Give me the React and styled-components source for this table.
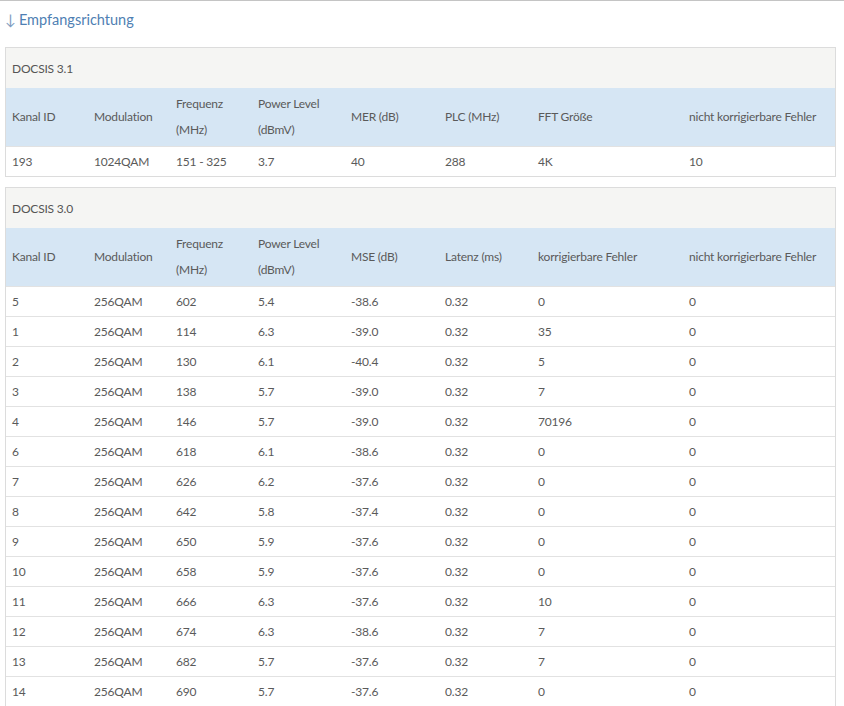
import React from "react";
import styled, { createGlobalStyle } from "styled-components";

const GlobalStyle = createGlobalStyle`
  html, body {
    margin: 0;
    padding: 0;
    background: #ffffff;
  }
  body {
    font-family: "Lato", "Liberation Sans", sans-serif;
    font-size: 12px;
    letter-spacing: -0.2px;
    color: #555555;
    border-top: 1px solid #c4c4c4;
  }
`;

const COLS = [82, 82, 82, 93, 94, 93, 151, 152];

const docsis31 = {
  title: "DOCSIS 3.1",
  headers: [
    "Kanal ID",
    "Modulation",
    ["Frequenz", "(MHz)"],
    ["Power Level", "(dBmV)"],
    "MER (dB)",
    "PLC (MHz)",
    "FFT Größe",
    "nicht korrigierbare Fehler"
  ],
  rows: [["193", "1024QAM", "151 - 325", "3.7", "40", "288", "4K", "10"]]
};

const docsis30 = {
  title: "DOCSIS 3.0",
  headers: [
    "Kanal ID",
    "Modulation",
    ["Frequenz", "(MHz)"],
    ["Power Level", "(dBmV)"],
    "MSE (dB)",
    "Latenz (ms)",
    "korrigierbare Fehler",
    "nicht korrigierbare Fehler"
  ],
  rows: [
    ["5", "256QAM", "602", "5.4", "-38.6", "0.32", "0", "0"],
    ["1", "256QAM", "114", "6.3", "-39.0", "0.32", "35", "0"],
    ["2", "256QAM", "130", "6.1", "-40.4", "0.32", "5", "0"],
    ["3", "256QAM", "138", "5.7", "-39.0", "0.32", "7", "0"],
    ["4", "256QAM", "146", "5.7", "-39.0", "0.32", "70196", "0"],
    ["6", "256QAM", "618", "6.1", "-38.6", "0.32", "0", "0"],
    ["7", "256QAM", "626", "6.2", "-37.6", "0.32", "0", "0"],
    ["8", "256QAM", "642", "5.8", "-37.4", "0.32", "0", "0"],
    ["9", "256QAM", "650", "5.9", "-37.6", "0.32", "0", "0"],
    ["10", "256QAM", "658", "5.9", "-37.6", "0.32", "0", "0"],
    ["11", "256QAM", "666", "6.3", "-37.6", "0.32", "10", "0"],
    ["12", "256QAM", "674", "6.3", "-38.6", "0.32", "7", "0"],
    ["13", "256QAM", "682", "5.7", "-37.6", "0.32", "7", "0"],
    ["14", "256QAM", "690", "5.7", "-37.6", "0.32", "0", "0"]
  ]
};

const ChannelTable = ({ data }) => (
  <Panel>
    <Table>
      <colgroup>
        {COLS.map((w, i) => (
          <col key={i} style={{ width: w }} />
        ))}
      </colgroup>
      <thead>
        <tr>
          <TitleCell colSpan={COLS.length}>{data.title}</TitleCell>
        </tr>
        <tr>
          {data.headers.map((h, i) => (
            <HeadCell key={i}>
              {Array.isArray(h) ? (
                <>
                  {h[0]}
                  <br />
                  {h[1]}
                </>
              ) : (
                h
              )}
            </HeadCell>
          ))}
        </tr>
      </thead>
      <tbody>
        {data.rows.map((r, i) => (
          <Row key={i}>
            {r.map((c, j) => (
              <Cell key={j}>{c}</Cell>
            ))}
          </Row>
        ))}
      </tbody>
    </Table>
  </Panel>
);

export default function App() {
  return (
    <>
      <GlobalStyle />
      <Page>
        <Heading>
          <Arrow>↓</Arrow>Empfangsrichtung
        </Heading>
        <ChannelTable data={docsis31} />
        <ChannelTable data={docsis30} />
      </Page>
    </>
  );
}

const Page = styled.div`
  display: flex;
  flex-direction: column;
  gap: 10px;
  padding: 9px 8px 0 5px;
`;

const Heading = styled.div`
  font-size: 14.5px;
  line-height: 20px;
  letter-spacing: 0;
  color: #4f7fb3;
  margin-bottom: 7px;
`;

const Arrow = styled.span`
  margin-right: 3px;
  color: #7d9cc0;
`;

const Panel = styled.div`
  border: 1px solid #dcdcdc;
  width: 829px;
`;

const Table = styled.table`
  width: 829px;
  table-layout: fixed;
  border-collapse: collapse;
`;

const TitleCell = styled.th`
  height: 40px;
  padding: 0 6px;
  text-align: left;
  font-weight: normal;
  color: #555555;
  background: #f5f5f3;
  vertical-align: middle;
`;

const HeadCell = styled.th`
  height: 58px;
  padding: 0 6px;
  text-align: left;
  font-weight: normal;
  line-height: 26px;
  color: #5a5a5a;
  background: #d6e6f4;
  vertical-align: middle;
  white-space: nowrap;
`;

const Row = styled.tr`
  border-top: 1px solid #e2e2e2;
`;

const Cell = styled.td`
  height: 29px;
  padding: 0 6px;
  vertical-align: middle;
  color: #5a5a5a;
`;
